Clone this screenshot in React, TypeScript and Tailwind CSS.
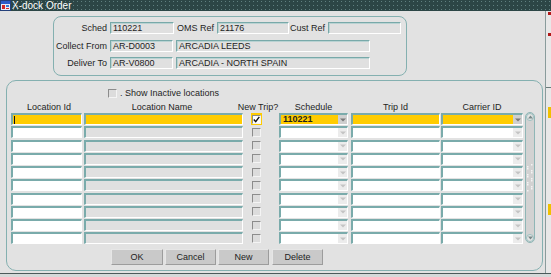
import React from 'react';

const TOPFIELD =
  'h-[12px] px-[2px] flex items-center border-t border-l border-b border-r border-t-[#78a9a9] border-l-[#78a9a9] border-b-white border-r-white shadow-[inset_1px_1px_0_#b9d2d2] bg-[#e0e0e0] text-[9px] leading-none whitespace-nowrap overflow-hidden';

const CELL =
  'h-full flex items-center border-t-2 border-l-2 border-b border-r border-t-[#7aabab] border-l-[#7aabab] border-b-white border-r-white';

function Arrow({ dark }: { dark?: boolean }) {
  return (
    <div
      className={`w-[9px] h-full flex items-center justify-center ${dark ? 'bg-[#cfcfcf]' : 'bg-[#ececec]'}`}
    >
      <svg width="6" height="4" viewBox="0 0 6 4">
        <path d="M0 0.5h6L3 3.5z" fill={dark ? '#7a7a7a' : '#c4c4c4'} />
      </svg>
    </div>
  );
}

function Check({ checked }: { checked?: boolean }) {
  return (
    <div
      className={`w-[9px] h-[9px] border border-t-[#8c8c8c] border-l-[#8c8c8c] border-b-[#f4f4f4] border-r-[#f4f4f4] flex items-center justify-center ${checked ? 'bg-white' : 'bg-[#dcdcdc]'}`}
    >
      {checked && (
        <svg width="7" height="7" viewBox="0 0 7 7">
          <path d="M0.8 3.5 L2.7 5.6 L6.3 0.8" stroke="#111" strokeWidth="1.4" fill="none" />
        </svg>
      )}
    </div>
  );
}

function Btn({ label, className }: { label: string; className: string }) {
  return (
    <div
      className={`${className} h-[16px] flex items-center justify-center bg-[#c9c9c9] border border-t-[#e6e6e6] border-l-[#e6e6e6] border-b-[#9c9c9c] border-r-[#9c9c9c] text-[9px] text-[#222]`}
    >
      {label}
    </div>
  );
}

const rows = [0, 1, 2, 3, 4, 5, 6, 7, 8, 9];

export default function App() {
  return (
    <div className="w-[551px] h-[277px] flex flex-col overflow-hidden bg-[#e2e2e2] text-[#1e1e1e] font-['Liberation_Sans',Arial,sans-serif]">
      {/* Title bar */}
      <div className="h-[11px] flex items-center bg-[#2c4646] bg-[radial-gradient(circle_at_1.5px_1.5px,#5f8080_0.6px,transparent_0.9px)] bg-[length:4px_4px]">
        <svg width="11" height="11" viewBox="0 0 11 11" className="mr-[1px]">
          <rect x="0.5" y="0.5" width="10" height="10" fill="#e8eef8" stroke="#24407a" />
          <rect x="1" y="1" width="9" height="3" fill="#2c5cc8" />
          <rect x="2" y="5" width="3" height="4" fill="#d02828" />
          <rect x="6" y="5" width="3" height="2" fill="#3a7ad8" />
          <rect x="6" y="8" width="3" height="1" fill="#d02828" />
        </svg>
        <span className="text-white text-[10px] leading-none">X-dock Order</span>
      </div>

      <div className="flex-1 flex">
        {/* Window body */}
        <div className="w-[545px] flex flex-col">
          {/* Header panel */}
          <div className="ml-[53px] mt-[5px] w-[354px] h-[60px] rounded-[8px] border border-[#84b0b0] pt-[5px] flex flex-col text-[9px] leading-none">
            <div className="flex items-center h-[12px]">
              <div className="w-[53px] text-right">Sched</div>
              <div className={`${TOPFIELD} ml-[3px] w-[64px]`}>110221</div>
              <div className="w-[40px] text-right">OMS Ref</div>
              <div className={`${TOPFIELD} ml-[3px] w-[72px]`}>21176</div>
              <div className="w-[36px] text-right">Cust Ref</div>
              <div className={`${TOPFIELD} ml-[3px] w-[73px]`}></div>
            </div>
            <div className="flex items-center h-[12px] mt-[6px]">
              <div className="w-[53px] text-right">Collect From</div>
              <div className={`${TOPFIELD} ml-[3px] w-[63px]`}>AR-D0003</div>
              <div className={`${TOPFIELD} ml-[3px] w-[194px]`}>ARCADIA LEEDS</div>
            </div>
            <div className="flex items-center h-[12px] mt-[5px]">
              <div className="w-[53px] text-right">Deliver To</div>
              <div className={`${TOPFIELD} ml-[3px] w-[63px]`}>AR-V0800</div>
              <div className={`${TOPFIELD} ml-[3px] w-[194px]`}>ARCADIA - NORTH SPAIN</div>
            </div>
          </div>

          {/* Locations panel */}
          <div className="ml-[6px] mt-[4px] w-[537px] h-[191px] rounded-[10px] border border-[#84b0b0] pl-[4px] flex flex-col text-[9px] leading-none">
            <div className="ml-[97px] mt-[8px] h-[9px] flex items-center">
              <Check />
              <span className="ml-[3px]">. Show Inactive locations</span>
            </div>

            <div className="mt-[4px] h-[10px] flex items-center leading-[10px]">
              <div className="w-[76px] text-center">Location Id</div>
              <div className="w-[150px] text-center">Location Name</div>
              <div className="w-[42px] text-center whitespace-nowrap">New Trip?</div>
              <div className="w-[69px] text-center">Schedule</div>
              <div className="ml-[3px] w-[89px] text-center">Trip Id</div>
              <div className="ml-[1px] w-[82px] text-center">Carrier ID</div>
            </div>

            <div className="flex items-start">
              <div className="pt-[1px] flex flex-col gap-y-[1.25px]">
                {rows.map((i) => {
                  const sel = i === 0;
                  return (
                    <div key={i} className="flex h-[12px]">
                      <div className={`${CELL} w-[71px] ${sel ? 'bg-[#ffcc00]' : 'bg-white'}`}>
                        {sel && <div className="ml-[1px] w-[1px] h-[8px] bg-[#111]" />}
                      </div>
                      <div className={`${CELL} ml-[2px] w-[159px] ${sel ? 'bg-[#ffcc00]' : 'bg-[#e0e0e0]'}`} />
                      <div className="w-[36px] h-full flex items-center">
                        {sel ? (
                          <div className="ml-[8px] w-[11px] h-full bg-[#ffcc00] flex items-center justify-center">
                            <Check checked />
                          </div>
                        ) : (
                          <div className="ml-[9px]">
                            <Check />
                          </div>
                        )}
                      </div>
                      <div className={`${CELL} w-[69px] justify-between ${sel ? 'bg-[#ffcc00]' : 'bg-white'}`}>
                        <span className="ml-[2px] font-bold">{sel ? '110221' : ''}</span>
                        <Arrow dark={sel} />
                      </div>
                      <div className={`${CELL} ml-[3px] w-[89px] ${sel ? 'bg-[#ffcc00]' : 'bg-white'}`} />
                      <div className={`${CELL} ml-[1px] w-[82px] justify-end ${sel ? 'bg-[#ffcc00]' : 'bg-white'}`}>
                        <Arrow dark={sel} />
                      </div>
                    </div>
                  );
                })}
              </div>

              {/* Scrollbar */}
              <div className="ml-[2px] w-[10px] h-[131px] rounded-[5px] border border-[#8fb6b6] bg-[#d2d2d2] flex flex-col items-center justify-between">
                <div className="w-[8px] h-[8px] rounded-full border border-[#9cc0c0] bg-[#e4e4e4] flex items-center justify-center">
                  <svg width="5" height="4" viewBox="0 0 5 4">
                    <path d="M0 3.5h5L2.5 0.5z" fill="#7a8a8a" />
                  </svg>
                </div>
                <svg width="8" height="30" viewBox="0 0 8 30">
                  {[0, 1, 2, 3, 4, 5, 6].map((k) => (
                    <g key={k}>
                      <rect x={k % 2 ? 1 : 5} y={k * 4 + 1} width="1.5" height="1.5" fill="#f4f4f4" />
                      <rect x={k % 2 ? 5 : 1} y={k * 4 + 3} width="1.5" height="1.5" fill="#f4f4f4" />
                    </g>
                  ))}
                </svg>
                <div className="w-[8px] h-[8px] rounded-full border border-[#9cc0c0] bg-[#e4e4e4] flex items-center justify-center">
                  <svg width="5" height="4" viewBox="0 0 5 4">
                    <path d="M0 0.5h5L2.5 3.5z" fill="#7a8a8a" />
                  </svg>
                </div>
              </div>
            </div>

            <div className="mt-[5px] ml-[100px] flex">
              <Btn label="OK" className="w-[52px]" />
              <Btn label="Cancel" className="ml-[2px] w-[51px]" />
              <Btn label="New" className="ml-[2px] w-[51px]" />
              <Btn label="Delete" className="ml-[3px] w-[51px]" />
            </div>
          </div>
        </div>

        {/* Edge of the window behind */}
        <div className="w-[6px] border-l border-[#8a9c9c] bg-[#e8e8e8] flex flex-col">
          <div className="mt-[1px] h-[3px] ml-[2px] bg-[#b01818]" />
          <div className="mt-[18px] h-[3px] ml-[2px] bg-[#b01818]" />
          <div className="mt-[51px] h-[1px] bg-[#6a7a7a]" />
          <div className="mt-[19px] h-[11px] ml-[2px] bg-[#f0c000]" />
          <div className="mt-[86px] h-[11px] ml-[2px] bg-[#f0c000]" />
        </div>
      </div>

      <div className="h-[4px] border-t border-[#4c5a5a] bg-[#d6d9d9]" />
    </div>
  );
}
